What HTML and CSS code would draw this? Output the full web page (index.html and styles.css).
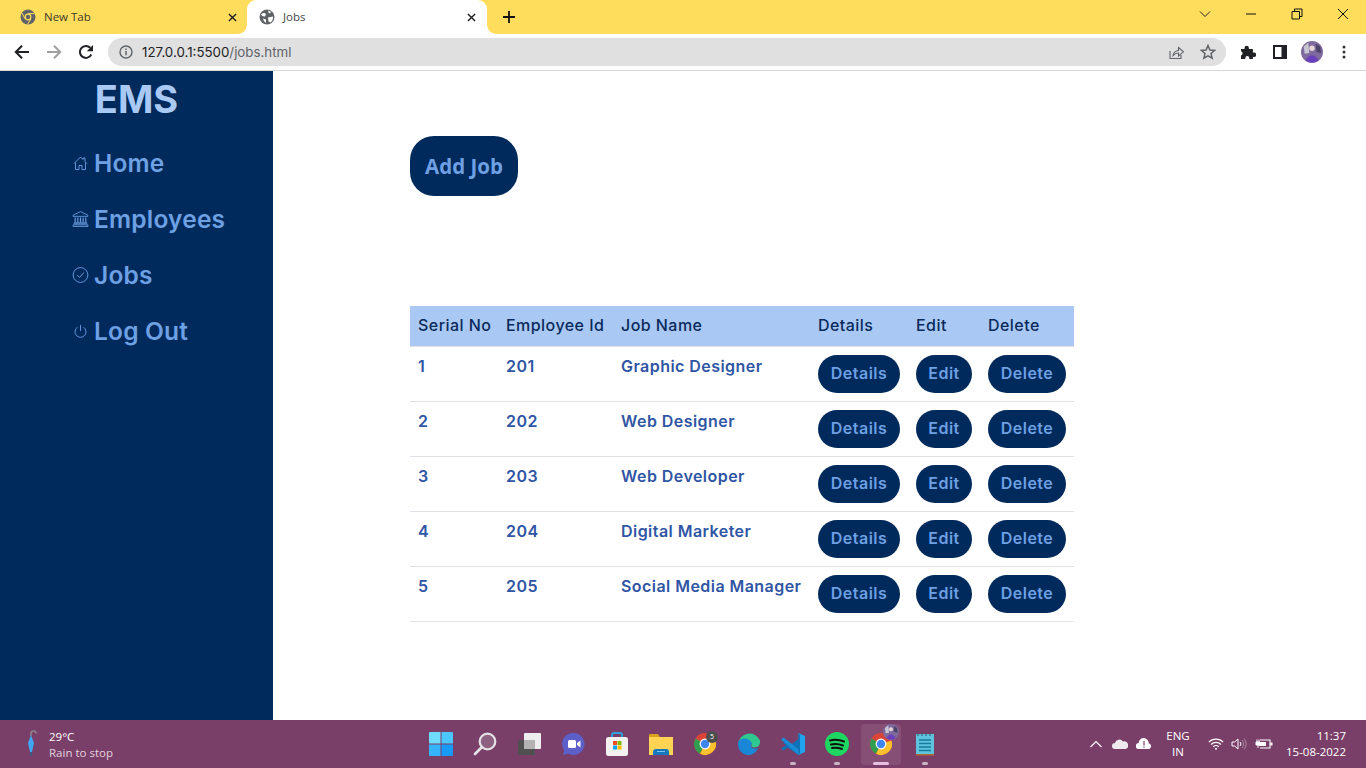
FILE: index.html
```html
<!DOCTYPE html>
<html lang="en">
<head>
  <meta charset="UTF-8">
  <title>Jobs</title>
  <link rel="stylesheet" href="styles.css">
</head>
<body>
  <svg class="defs" width="0" height="0">
    <symbol id="chrome" viewBox="0 0 24 24">
      <circle cx="12" cy="12" r="11" fill="#db4437"/>
      <path d="M12 12 L2.500 6.500 A11 11 0 0 0 7 21.800 Z" fill="#2f9e4f"/>
      <path d="M12 12 L22.400 8.500 A11 11 0 0 1 7 21.800 Z" fill="#fbc02d"/>
      <circle cx="12" cy="12" r="5.400" fill="#fff"/>
      <circle cx="12" cy="12" r="4.200" fill="#3f85f4"/>
    </symbol>
    <symbol id="avatar" viewBox="0 0 24 24">
      <circle cx="12" cy="12" r="12" fill="#7e6a9c"/>
      <path d="M3 6 L8 2 L9 13 L4 14 Z" fill="#c9c6d4"/>
      <path d="M16 3 L21 6 L22 13 L17 12 Z" fill="#4b4368"/>
      <circle cx="12" cy="8" r="3" fill="#e8d5d5"/>
      <path d="M5 21 Q12 10 19 21 A12 12 0 0 1 5 21 Z" fill="#6a3fc0"/>
    </symbol>
  </svg>

  <div class="tabstrip">
    <div class="tab">
      <svg class="favicon" viewBox="0 0 16 16"><circle cx="8" cy="8" r="7.500" fill="#5f6368"/><circle cx="8" cy="8" r="3.400" fill="#ffdd5c"/><circle cx="8" cy="8" r="2.200" fill="#5f6368"/><path d="M8 4.600h6.400M5 9.800L2 4M10.900 9.800L7.500 15.300" stroke="#ffdd5c" stroke-width="1"/></svg>
      <span class="tab-title">New Tab</span>
      <svg class="tab-close" viewBox="0 0 10 10"><path d="M1 1l8 8M9 1l-8 8" stroke="#202124" stroke-width="1.600"/></svg>
    </div>
    <div class="tab active">
      <svg class="favicon" viewBox="0 0 16 16"><circle cx="8" cy="8" r="7.500" fill="#5f6368"/><path d="M2 5.500 Q5 3 7 5 L6 7.500 Q3.500 8 2 5.500ZM9 8.500 L14 7.500 Q14.500 11 11.500 13.500 L9.500 12.500Z M9 1.500 L12.500 3 L10 4.500Z M4 9.500 L7 10.500 L7 14 Q4.500 13 4 9.500Z" fill="#fff"/></svg>
      <span class="tab-title">Jobs</span>
      <svg class="tab-close" viewBox="0 0 10 10"><path d="M1 1l8 8M9 1l-8 8" stroke="#202124" stroke-width="1.600"/></svg>
    </div>
    <svg class="new-tab" viewBox="0 0 12 12"><path d="M6 0v12M0 6h12" stroke="#111" stroke-width="1.800"/></svg>
    <div class="window-controls">
      <div class="win-btn"><svg viewBox="0 0 12 12" width="12" height="12"><path d="M1 3.500l5 5 5-5" fill="none" stroke="#222" stroke-width="1"/></svg></div>
      <div class="win-btn"><svg viewBox="0 0 12 12" width="12" height="12"><path d="M1 6h10" stroke="#111" stroke-width="1"/></svg></div>
      <div class="win-btn"><svg viewBox="0 0 12 12" width="12" height="12"><path d="M1 3.500h7.500v7.500h-7.500zM3.500 3.500v-2.500h7.500v7.500h-2.500" fill="none" stroke="#111" stroke-width="1"/></svg></div>
      <div class="win-btn"><svg viewBox="0 0 12 12" width="12" height="12"><path d="M1 1l10 10M11 1L1 11" stroke="#111" stroke-width="1"/></svg></div>
    </div>
  </div>

  <div class="toolbar">
    <div class="tool-btn"><svg viewBox="0 0 16 16" width="16" height="16"><path d="M15 8H2M8 1.800L1.800 8 8 14.200" fill="none" stroke="#202124" stroke-width="2"/></svg></div>
    <div class="tool-btn"><svg viewBox="0 0 16 16" width="16" height="16"><path d="M1 8h13M8 1.800L14.200 8 8 14.200" fill="none" stroke="#a0a0a0" stroke-width="2"/></svg></div>
    <div class="tool-btn"><svg viewBox="0 0 16 16" width="16" height="16"><path d="M13.300 10.500A6 6 0 1 1 12.300 3.800" fill="none" stroke="#202124" stroke-width="2"/><path d="M15 1v6.200H8.800z" fill="#202124"/></svg></div>
    <div class="omnibox">
      <svg class="info" viewBox="0 0 14 14" width="14" height="14"><circle cx="7" cy="7" r="6" fill="none" stroke="#5f6368" stroke-width="1.400"/><path d="M7 6v4.200M7 3.500v1.400" stroke="#5f6368" stroke-width="1.500"/></svg>
      <span class="url">127.0.0.1:5500<span class="url-path">/jobs.html</span></span>
      <svg class="omni-icon" viewBox="0 0 16 16" width="16" height="16"><path d="M2 7v7.500h11V11" fill="none" stroke="#5f6368" stroke-width="1.100"/><path d="M5 11.500Q6 7 10.500 6.500V3.500L15.500 7.800 10.500 12V9Q7.500 9 5 11.500Z" fill="none" stroke="#5f6368" stroke-width="1.100"/></svg>
      <svg class="omni-icon star" viewBox="0 0 16 16" width="16" height="16"><path d="M8 1.500l1.900 4.500 4.800.4-3.650 3.150 1.100 4.700L8 11.800l-4.150 2.450 1.100-4.700L1.300 6.400l4.800-.4z" fill="none" stroke="#5f6368" stroke-width="1.500"/></svg>
    </div>
    <div class="tool-btn"><svg viewBox="0 0 16 16" width="16" height="16"><path d="M1 5h3.500V4a2.200 2.200 0 0 1 4.400 0v1h4v3.600H14a2.200 2.200 0 0 1 0 4.400h-1.100V15H9.300v-1a2 2 0 0 0-4 0v1H1v-3.800h.6a2.200 2.200 0 0 0 0-3.600H1z" fill="#202124"/></svg></div>
    <div class="tool-btn"><svg viewBox="0 0 14 14" width="14" height="14"><path d="M0 0h14v14H0zM8.500 2H2v10h6.500z" fill="#202124" fill-rule="evenodd"/></svg></div>
    <div class="tool-btn"><svg width="22" height="22"><use href="#avatar"/></svg></div>
    <div class="tool-btn"><svg viewBox="0 0 4 14" width="4" height="14"><circle cx="2" cy="2" r="1.500" fill="#333"/><circle cx="2" cy="7" r="1.500" fill="#333"/><circle cx="2" cy="12" r="1.500" fill="#333"/></svg></div>
  </div>

  <div class="page">
    <nav class="sidebar">
      <h1 class="brand">EMS</h1>
      <ul class="menu">
        <li>
          <svg viewBox="0 0 16 16" width="16" height="16"><path d="M1.500 8.500L8 2l2.500 2.500V3h2v3.500l2 2M3 7.500V14.500H6.500V10.500H9.500V14.500H13V7.500" fill="none" stroke="#6ea0e4" stroke-width="0.900"/></svg>
          <a href="#">Home</a>
        </li>
        <li>
          <svg viewBox="0 0 16 16" width="18" height="18"><path d="M8 1L15 4.500V5.500H1V4.500ZM1 13.500H15V15H1ZM2 12.500H14V11.500H2Z" fill="none" stroke="#6ea0e4" stroke-width="0.800"/><path d="M3 6.500v4.500M5.500 6.500v4.500M8 6.500v4.500M10.500 6.500v4.500M13 6.500v4.500" stroke="#6ea0e4" stroke-width="1.100"/></svg>
          <a href="#">Employees</a>
        </li>
        <li>
          <svg viewBox="0 0 16 16" width="16" height="16"><circle cx="8" cy="8" r="7.400" fill="none" stroke="#6ea0e4" stroke-width="0.900"/><path d="M4.800 8.200l2.200 2.200 4.300-4.800" fill="none" stroke="#6ea0e4" stroke-width="1"/></svg>
          <a href="#">Jobs</a>
        </li>
        <li>
          <svg viewBox="0 0 16 16" width="16" height="16"><path d="M8 2v6" stroke="#6ea0e4" stroke-width="0.900"/><path d="M5 4.200a5.500 5.500 0 1 0 6 0" fill="none" stroke="#6ea0e4" stroke-width="0.900"/></svg>
          <a href="#">Log Out</a>
        </li>
      </ul>
    </nav>

    <main class="content">
      <button class="add-job">Add Job</button>
      <table class="jobs">
        <colgroup>
          <col class="c-serial"><col class="c-emp"><col class="c-name"><col class="c-details"><col class="c-edit"><col class="c-delete">
        </colgroup>
        <thead>
          <tr><th>Serial No</th><th>Employee Id</th><th>Job Name</th><th>Details</th><th>Edit</th><th>Delete</th></tr>
        </thead>
        <tbody>
          <tr><td>1</td><td>201</td><td>Graphic Designer</td><td><button class="pill w-details">Details</button></td><td><button class="pill w-edit">Edit</button></td><td><button class="pill w-delete">Delete</button></td></tr>
          <tr><td>2</td><td>202</td><td>Web Designer</td><td><button class="pill w-details">Details</button></td><td><button class="pill w-edit">Edit</button></td><td><button class="pill w-delete">Delete</button></td></tr>
          <tr><td>3</td><td>203</td><td>Web Developer</td><td><button class="pill w-details">Details</button></td><td><button class="pill w-edit">Edit</button></td><td><button class="pill w-delete">Delete</button></td></tr>
          <tr><td>4</td><td>204</td><td>Digital Marketer</td><td><button class="pill w-details">Details</button></td><td><button class="pill w-edit">Edit</button></td><td><button class="pill w-delete">Delete</button></td></tr>
          <tr><td>5</td><td>205</td><td>Social Media Manager</td><td><button class="pill w-details">Details</button></td><td><button class="pill w-edit">Edit</button></td><td><button class="pill w-delete">Delete</button></td></tr>
        </tbody>
      </table>
    </main>
  </div>

  <footer class="taskbar">
    <div class="weather">
      <svg viewBox="0 0 12 28" width="12" height="28"><path d="M6 6V3.500Q6 1 8.500 1T11 3.500" fill="none" stroke="#8d8088" stroke-width="1.600"/><path d="M6 5L9 13 7 22H5L3 13Z" fill="#3fa5f0"/><path d="M6 22v4" stroke="#26618f" stroke-width="1.400"/></svg>
      <div class="weather-text">
        <div class="temp">29°C</div>
        <div class="forecast">Rain to stop</div>
      </div>
    </div>

    <div class="apps">
      <div class="app"><svg viewBox="0 0 24 24" width="24" height="24"><path d="M0 1q0-1 1-1h10.500v11.500H0z" fill="#6fdcfb"/><path d="M12.500 0H23q1 0 1 1v10.500H12.500z" fill="#4ac6fa"/><path d="M0 12.500h11.500V24H1q-1 0-1-1z" fill="#36b4fb"/><path d="M12.500 12.500H24V23q0 1-1 1H12.500z" fill="#189bf8"/></svg></div>
      <div class="app"><svg viewBox="0 0 24 24" width="24" height="24"><circle cx="14.500" cy="9.500" r="7.800" fill="#8d5f80" stroke="#e4e2e4" stroke-width="2.200"/><path d="M9 15l-7 7" stroke="#e4e2e4" stroke-width="2.600" stroke-linecap="round"/></svg></div>
      <div class="app"><svg viewBox="0 0 24 24" width="24" height="24"><rect x="1" y="8" width="17" height="15" rx="1" fill="#505050"/><rect x="7" y="1" width="17" height="16" rx="1" fill="#eeeeee"/><rect x="7" y="8" width="11" height="9" fill="#b3b3b3"/></svg></div>
      <div class="app"><svg viewBox="0 0 24 24" width="24" height="24"><path d="M12.500 1a11 11 0 1 1-5 20.800L2 23l1.200-4.500A11 11 0 0 1 12.500 1z" fill="#5b5fc7"/><rect x="7" y="8" width="8" height="8" rx="1.500" fill="#fff"/><path d="M16 11l3.500-2.500v7L16 13z" fill="#fff"/></svg></div>
      <div class="app"><svg viewBox="0 0 24 24" width="24" height="24"><path d="M7 6V3q0-2 2-2h6q2 0 2 2v3" fill="none" stroke="#2aa5e0" stroke-width="1.800"/><rect x="1" y="5" width="22" height="19" rx="2.500" fill="#f4f2f1"/><rect x="8" y="9" width="4" height="4" fill="#f25022"/><rect x="12.500" y="9" width="4" height="4" fill="#7fba00"/><rect x="8" y="13.500" width="4" height="4" fill="#00a4ef"/><rect x="12.500" y="13.500" width="4" height="4" fill="#ffb900"/></svg></div>
      <div class="app"><svg viewBox="0 0 24 24" width="24" height="24"><path d="M0 3q0-1 1-1h8l2 3h13v18H0z" fill="#d9a21b"/><rect x="0" y="5" width="24" height="18" fill="#ffd454"/><path d="M4 23v-3q0-3 3-3h10q3 0 3 3v3z" fill="#1578be"/><rect x="8" y="19" width="8" height="1" fill="#7fc4ee"/></svg></div>
      <div class="app"><svg width="24" height="24"><use href="#chrome"/></svg><span class="count">5</span></div>
      <div class="app"><svg viewBox="0 0 24 24" width="24" height="24"><path d="M1 12A11.500 11.500 0 0 1 23 8.500Q24 15 17 15.500 13 15 15 11.500 10 7 5 10 1.500 12 1 14z" fill="#2fc98f"/><path d="M1 12Q1 7 7 6.500 13 6.500 15 11.500 12 15 17 16.500 20 17 21.500 16 17 24 10 23 1 21 1 12z" fill="#1a86d6"/></svg></div>
      <div class="app running"><svg viewBox="0 0 24 24" width="24" height="24"><path d="M17.500 1L24 4v16l-6.500 3z" fill="#22a3ee"/><path d="M17.500 1V7L9 13.500 4 9.500 2 11 5.500 13 0 16.500 2.500 18.500 6.500 15.500 17.500 23 19 21 19 3z" fill="#0f72b8"/><path d="M0 7.500L2.500 5.500 17.500 17V23L0 7.500z" fill="#1a8bd6"/></svg></div>
      <div class="app running"><svg viewBox="0 0 24 24" width="24" height="24"><circle cx="12" cy="12" r="12" fill="#1ed760"/><path d="M5 8.500q7-2 14 1M6 12.500q6-1.500 12 1M7 16q5-1 10 1" fill="none" stroke="#111" stroke-width="2" stroke-linecap="round"/></svg></div>
      <div class="app current"><svg width="24" height="24"><use href="#chrome"/></svg><svg class="badge" width="16" height="16"><use href="#avatar"/></svg></div>
      <div class="app running"><svg viewBox="0 0 24 24" width="24" height="24"><rect x="3" y="2" width="18" height="20" fill="#5ec4de"/><path d="M3 22h18v1.500H3z" fill="#b5672e"/><path d="M6 8h12M6 11.500h12M6 15h12M6 18.500h12" stroke="#167a9c" stroke-width="1.600"/><path d="M5 1v3M9 1v3M13 1v3M17 1v3" stroke="#35566b" stroke-width="1"/></svg></div>
    </div>

    <div class="tray">
      <svg class="tray-icon chevron" viewBox="0 0 12 8" width="12" height="8"><path d="M.5 7L6 1.500 11.500 7" fill="none" stroke="#fff" stroke-width="1.100"/></svg>
      <svg class="tray-icon cloud" viewBox="0 0 16 10" width="16" height="10"><path d="M3 10a3 3 0 0 1 0-6 4.500 4.500 0 0 1 8-1.500A3.500 3.500 0 0 1 13.500 10z" fill="#eeeaed"/></svg>
      <svg class="tray-icon cloud2" viewBox="0 0 16 12" width="16" height="12"><path d="M3 11a3 3 0 0 1-.3-6 5 5 0 0 1 10 .2A3 3 0 0 1 13 11z" fill="#fff"/><path d="M8 3v4.500M8 8.500v1.200" stroke="#7a3f69" stroke-width="1.200"/></svg>
      <div class="lang">ENG<br>IN</div>
      <svg class="tray-icon wifi" viewBox="0 0 16 12" width="16" height="12"><path d="M.8 4.200a10 10 0 0 1 14.400 0M3 6.500a7 7 0 0 1 10 0M5.200 8.800a4 4 0 0 1 5.600 0" fill="none" stroke="#fff" stroke-width="1.100"/><circle cx="8" cy="10.800" r="1" fill="#fff"/></svg>
      <svg class="tray-icon volume" viewBox="0 0 16 14" width="16" height="14"><path d="M1 5h2.500L7 2v10L3.500 9H1z" fill="none" stroke="#fff" stroke-width="1"/><path d="M9 5a3 3 0 0 1 0 4" fill="none" stroke="#fff" stroke-width="1"/><path d="M11 3a6 6 0 0 1 0 8M13 1.500a8 8 0 0 1 0 11" fill="none" stroke="#a98aa1" stroke-width="1"/></svg>
      <svg class="tray-icon battery" viewBox="0 0 18 12" width="18" height="12"><path d="M5 2h10v8H5" fill="none" stroke="#fff" stroke-width="1.100"/><path d="M15.500 4.500h2v3h-2z" fill="#fff"/><rect x="4" y="4" width="7" height="4" fill="#fff"/><path d="M1 4h4v3H1zM2 1.500V4M4 1.500V4M3 7v3" stroke="#fff" stroke-width="1" fill="#fff"/></svg>
      <div class="clock">11:37<br>15-08-2022</div>
    </div>
  </footer>
</body>
</html>
```

FILE: styles.css
```css
* {
  box-sizing: border-box;
}
html, body {
  height: 100%;
}
body {
  margin: 0;
  display: flex;
  flex-direction: column;
  height: 768px;
  overflow: hidden;
  font-family: Inter, "Liberation Sans", sans-serif;
  background: #fff;
}
.defs {
  position: absolute;
}

/* browser chrome */
.tabstrip {
  height: 34px;
  display: flex;
  align-items: center;
  background: #ffdd5c;
  font-family: "Open Sans", "Liberation Sans", sans-serif;
  flex-shrink: 0;
}
.tab {
  width: 240px;
  height: 34px;
  display: flex;
  align-items: center;
  padding: 0 11px 0 12px;
  font-size: 11.5px;
  color: #3c3a2a;
  position: relative;
}
.tab:first-child {
  width: 247px;
  padding-left: 20px;
  padding-right: 10px;
}
.tab.active {
  background: #fff;
  border-radius: 9px 9px 0 0;
  color: #45474a;
}
.tab.active::before,
.tab.active::after {
  content: "";
  position: absolute;
  bottom: 0;
  width: 9px;
  height: 9px;
}
.tab.active::before {
  left: -9px;
  background: radial-gradient(circle at 0 0, #ffdd5c 8.5px, #fff 9px);
}
.tab.active::after {
  right: -9px;
  background: radial-gradient(circle at 100% 0, #ffdd5c 8.5px, #fff 9px);
}
.favicon {
  width: 16px;
  height: 16px;
  flex-shrink: 0;
}
.tab-title {
  flex: 1;
  margin-left: 8px;
  padding-bottom: 1px;
}
.tab-close {
  width: 9px;
  height: 9px;
}
.new-tab {
  width: 12px;
  height: 12px;
  margin-left: 16px;
}
.window-controls {
  margin-left: auto;
  display: flex;
}
.win-btn {
  width: 46px;
  height: 34px;
  display: flex;
  align-items: center;
  justify-content: center;
  padding-bottom: 6px;
}

.toolbar {
  height: 37px;
  flex-shrink: 0;
  display: flex;
  align-items: center;
  padding: 0 6px 1px;
  background: #fff;
  border-bottom: 1px solid #d6d6d6;
}
.tool-btn {
  width: 32px;
  height: 28px;
  display: flex;
  align-items: center;
  justify-content: center;
}
.omnibox {
  flex: 1;
  height: 28px;
  margin: 0 6px;
  padding: 0 10px 0 11px;
  display: flex;
  align-items: center;
  background: #e0e0e0;
  border-radius: 14px;
}
.url {
  flex: 1;
  margin-left: 9px;
  font-size: 13.3px;
  color: #202124;
}
.url-path {
  color: #5f6368;
}
.omni-icon {
  margin-right: 16px;
}
.omni-icon.star {
  margin-right: 0;
}

/* page */
.page {
  flex: 1;
  display: flex;
  min-height: 0;
}
.sidebar {
  width: 273px;
  background: #002a5c;
  padding-top: 3px;
}
.brand {
  margin: 0;
  text-align: center;
  font-size: 38px;
  line-height: 50px;
  font-weight: 700;
  color: #a9c9f4;
}
.menu {
  list-style: none;
  margin: 11px 0 0;
  padding: 0 0 0 72px;
}
.menu li {
  height: 56px;
  display: flex;
  align-items: center;
  gap: 5px;
}
.menu svg {
  width: 17px;
  flex-shrink: 0;
}
.menu a {
  font-size: 24.5px;
  letter-spacing: 0.2px;
  font-weight: 600;
  color: #6ea0e4;
  text-decoration: none;
}
.content {
  flex: 1;
  padding: 65px 0 0 137px;
}
.add-job {
  display: block;
  width: 108px;
  height: 60px;
  border: none;
  border-radius: 24px;
  background: #002a5c;
  color: #6ea0e4;
  font-family: "Open Sans", "Liberation Sans", sans-serif;
  font-size: 20.5px;
  font-weight: 700;
}
.jobs {
  margin-top: 110px;
  width: 664px;
  table-layout: fixed;
  border-collapse: collapse;
  font-size: 16px;
  line-height: 24px;
  letter-spacing: 0.45px;
}
.c-serial { width: 88px; }
.c-emp { width: 115px; }
.c-name { width: 197px; }
.c-details { width: 98px; }
.c-edit { width: 72px; }
.c-delete { width: 94px; }
.jobs th {
  padding: 7px 8px 9px;
  text-align: left;
  font-weight: 500;
  color: #0a2a5c;
  background: #a9c9f4;
  white-space: nowrap;
}
.jobs td {
  padding: 7px 8px 9px;
  vertical-align: top;
  font-weight: 600;
  color: #2f55a4;
  border-bottom: 1px solid #dee2e6;
  white-space: nowrap;
}
.jobs td:nth-child(n+4) {
  padding: 8px;
}
.jobs thead tr {
  border-bottom: 1px solid #dee2e6;
}
.pill {
  display: block;
  height: 38px;
  padding: 0 0 2px;
  border: none;
  border-radius: 19px;
  background: #002a5c;
  color: #6ea0e4;
  font-family: inherit;
  font-size: 16px;
  letter-spacing: 0.5px;
  font-weight: 600;
}
.w-details { width: 82px; }
.w-edit { width: 56px; }
.w-delete { width: 78px; }

/* windows taskbar */
.taskbar {
  height: 48px;
  flex-shrink: 0;
  display: grid;
  grid-template-columns: 1fr 528px 1fr;
  align-items: center;
  background: #7a3f69;
  color: #fff;
  font-family: "Open Sans", "Liberation Sans", sans-serif;
}
.weather {
  display: flex;
  align-items: center;
  gap: 12px;
  padding-left: 25px;
}
.temp {
  font-size: 11.5px;
  line-height: 17px;
}
.forecast {
  font-size: 11.5px;
  line-height: 16px;
  color: #e2d4de;
}
.apps {
  display: flex;
  height: 48px;
}
.app {
  width: 44px;
  height: 48px;
  display: flex;
  align-items: center;
  justify-content: center;
  position: relative;
}
.app.running::after,
.app.current::after {
  content: "";
  position: absolute;
  bottom: 3px;
  left: 50%;
  width: 6px;
  height: 3px;
  margin-left: -3px;
  border-radius: 2px;
  background: #c9b5c4;
}
.app.current::before {
  content: "";
  position: absolute;
  top: 4px;
  bottom: 3px;
  left: 2px;
  right: 2px;
  border-radius: 4px;
  background: rgba(255, 255, 255, 0.09);
}
.app.current::after {
  width: 16px;
  margin-left: -8px;
  background: #e6bfe0;
}
.app svg {
  position: relative;
}
.count {
  position: absolute;
  top: 11px;
  right: 9px;
  width: 12px;
  height: 12px;
  border-radius: 50%;
  background: #4d4d4d;
  font-size: 7px;
  line-height: 12px;
  text-align: center;
}
.app .badge {
  position: absolute;
  top: 4px;
  right: 4px;
}
.tray {
  display: flex;
  align-items: center;
  justify-content: flex-end;
  padding-right: 20px;
  font-size: 11.5px;
}
.tray-icon {
  flex-shrink: 0;
}
.chevron { margin-right: 10px; }
.cloud { margin-right: 8px; }
.cloud2 { margin-right: 13px; }
.lang {
  width: 26px;
  text-align: center;
  line-height: 16px;
  margin-right: 17px;
  white-space: nowrap;
}
.wifi { margin-right: 7px; }
.volume { margin-right: 8px; }
.battery { margin-right: 13px; }
.clock {
  text-align: right;
  line-height: 16px;
  white-space: nowrap;
}
```
